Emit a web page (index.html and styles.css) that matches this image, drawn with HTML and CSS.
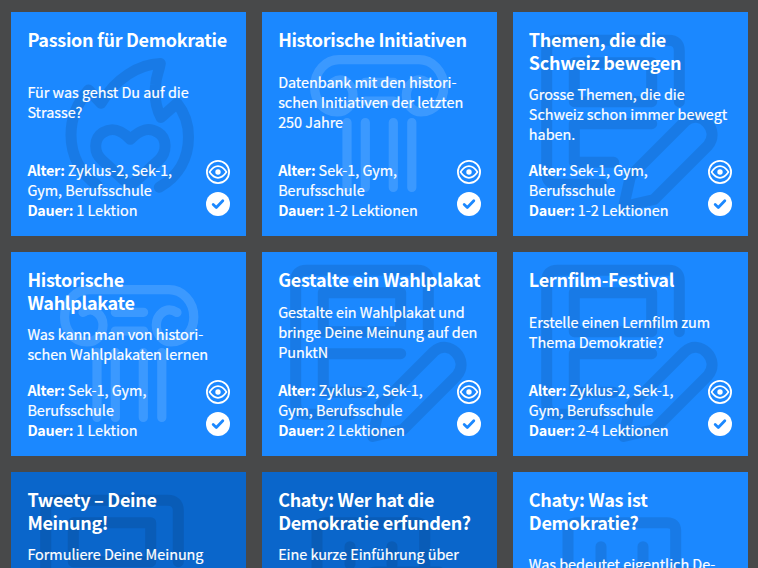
FILE: index.html
```
<!DOCTYPE html>
<html lang="de">
<head>
<meta charset="utf-8">
<title>Lerneinheiten</title>
<link rel="stylesheet" href="styles.css">
</head>
<body>
<svg class="defs" width="0" height="0" aria-hidden="true">
  <symbol id="flame" viewBox="-100 -100 200 200">
    <path d="M30.300 63.300C50 52 59.500 34 59.500 13C59.500 0 55 -12 48 -20.700L32 -6.500C27 -16 25 -25 26.600 -39C27 -48 30 -52 31.300 -60.500C10 -60 -14 -45 -28 -20.700L-40.400 -34C-51 -22 -58 -7 -58 11C-58 32 -48 50 -32 61"/>
    <path d="M1.300 62L-27 36C-36 28 -35 14 -26 8.500C-17 3 -9 5 1.300 15.300C12 5 20 3 29 8.500C38 14 38.500 28 30 36Z"/>
  </symbol>
  <symbol id="column" viewBox="-100 -100 200 200">
    <path d="M-46 -41.500C-35 -49 -26 -38 -26 -29C-26 -19 -33 -12 -42 -12C-56 -12 -64.400 -24 -64.400 -37C-64.400 -53 -53 -64.400 -40 -64.400H40C53 -64.400 64.800 -53 64.800 -37C64.800 -24 56 -12 42 -12C34 -12 27.300 -19 27.300 -29C27.300 -38 36 -49 48 -41.500"/>
    <path d="M-13.700 -41.700H14.600M-13.700 -23H14.600M-32 -1.500V63.500M-13.700 -1.500V63.500M14.300 -1.500V63.500M32.800 -1.500V63.500"/>
  </symbol>
  <symbol id="paper" viewBox="-100 -100 200 200">
    <path d="M49.300 -22.300V-73Q49.300 -83.700 38.500 -83.700H-72.500Q-83.300 -83.700 -83.300 -73V49.500Q-83.300 60.300 -72.500 60.300H-28M-55.700 -61.300H21.700V-22.300H-55.700ZM21.700 -.3H-55.700V38.300H-16.300"/>
    <path d="M-6.300 82.500L.5 52L55 -2.500C70 -16 91 6 78 21.500L24 75.500Z"/>
  </symbol>
  <symbol id="chat" viewBox="-100 -100 200 200">
    <path d="M-62 10V-53Q-62 -61.300 -53 -61.300H37Q45.700 -61.300 45.700 -53V-12M-29 -37.300V-20M13 -37.300V-20M-12 2V-4Q-12 -12 -3 -12H60"/>
  </symbol>
  <symbol id="eye" viewBox="0 0 24 24">
    <circle cx="12" cy="12" r="11.100" fill="none" stroke="#fff" stroke-width="1.800"/>
    <path d="M3.500 12Q7.500 6.200 12 6.200T20.500 12Q16.500 17.800 12 17.800T3.500 12Z" fill="none" stroke="#fff" stroke-width="1.700" stroke-linejoin="round"/>
    <circle cx="12" cy="12" r="2.700" fill="#fff"/>
  </symbol>
  <symbol id="check" viewBox="0 0 24 24">
    <circle cx="12" cy="12" r="12" fill="#fff"/>
    <path d="M7.200 12.500L10.300 15.400L16.800 8.800" fill="none" stroke="#1b88ff" stroke-width="2.800" stroke-linecap="round" stroke-linejoin="round"/>
  </symbol>
</svg>
<main class="grid">
  <article class="card">
    <svg class="mark"><use href="#flame"/></svg>
    <h2>Passion für Demokratie</h2>
    <p class="text">Für was gehst Du auf die<br>Strasse?</p>
    <footer><p><b>Alter:</b> Zyklus-2, Sek-1,<br>Gym, Berufsschule<br><b>Dauer:</b> 1 Lektion</p><div class="icons"><svg><use href="#eye"/></svg><svg><use href="#check"/></svg></div></footer>
  </article>
  <article class="card">
    <svg class="mark light"><use href="#column"/></svg>
    <h2>Historische Initiativen</h2>
    <p class="text">Datenbank mit den histori-<br>schen Initiativen der letzten<br>250 Jahre</p>
    <footer><p><b>Alter:</b> Sek-1, Gym,<br>Berufsschule<br><b>Dauer:</b> 1-2 Lektionen</p><div class="icons"><svg><use href="#eye"/></svg><svg><use href="#check"/></svg></div></footer>
  </article>
  <article class="card">
    <svg class="mark"><use href="#paper"/></svg>
    <h2>Themen, die die<br>Schweiz bewegen</h2>
    <p class="text">Grosse Themen, die die<br>Schweiz schon immer bewegt<br>haben.</p>
    <footer><p><b>Alter:</b> Sek-1, Gym,<br>Berufsschule<br><b>Dauer:</b> 1-2 Lektionen</p><div class="icons"><svg><use href="#eye"/></svg><svg><use href="#check"/></svg></div></footer>
  </article>
  <article class="card">
    <svg class="mark light"><use href="#column"/></svg>
    <h2>Historische<br>Wahlplakate</h2>
    <p class="text">Was kann man von histori-<br>schen Wahlplakaten lernen</p>
    <footer><p><b>Alter:</b> Sek-1, Gym,<br>Berufsschule<br><b>Dauer:</b> 1 Lektion</p><div class="icons"><svg><use href="#eye"/></svg><svg><use href="#check"/></svg></div></footer>
  </article>
  <article class="card">
    <svg class="mark"><use href="#paper"/></svg>
    <h2>Gestalte ein Wahlplakat</h2>
    <p class="text">Gestalte ein Wahlplakat und<br>bringe Deine Meinung auf den<br>PunktN</p>
    <footer><p><b>Alter:</b> Zyklus-2, Sek-1,<br>Gym, Berufsschule<br><b>Dauer:</b> 2 Lektionen</p><div class="icons"><svg><use href="#eye"/></svg><svg><use href="#check"/></svg></div></footer>
  </article>
  <article class="card">
    <svg class="mark"><use href="#paper"/></svg>
    <h2>Lernfilm-Festival</h2>
    <p class="text">Erstelle einen Lernfilm zum<br>Thema Demokratie?</p>
    <footer><p><b>Alter:</b> Zyklus-2, Sek-1,<br>Gym, Berufsschule<br><b>Dauer:</b> 2-4 Lektionen</p><div class="icons"><svg><use href="#eye"/></svg><svg><use href="#check"/></svg></div></footer>
  </article>
  <article class="card deep">
    <svg class="mark"><use href="#paper"/></svg>
    <h2>Tweety – Deine<br>Meinung!</h2>
    <p class="text top">Formuliere Deine Meinung</p>
  </article>
  <article class="card deep">
    <svg class="mark"><use href="#chat"/></svg>
    <h2>Chaty: Wer hat die<br>Demokratie erfunden?</h2>
    <p class="text top">Eine kurze Einführung über</p>
  </article>
  <article class="card">
    <svg class="mark"><use href="#chat"/></svg>
    <h2>Chaty: Was ist<br>Demokratie?</h2>
    <p class="text top late">Was bedeutet eigentlich De-</p>
  </article>
</main>
</body>
</html>
```
FILE: styles.css
```
* { box-sizing: border-box; }
html { overflow: hidden; background: #48494a; }
body {
  margin: 0;
  height: 568px;
  overflow: hidden;
  color: #fff;
  font-family: "Noto Sans CJK JP", "Noto Sans", sans-serif;
  font-size: 14.400px;
  line-height: 20px;
  letter-spacing: -.02px;
  -webkit-text-stroke: .2px #fff;
}
.defs { position: absolute; }
h2, p { margin: 0; white-space: nowrap; }
.grid {
  display: grid;
  grid-template-columns: repeat(3, minmax(0, 1fr));
  grid-template-rows: 224px 204px 224px;
  gap: 16px;
  padding: 12px 10.400px 0 11.400px;
}
.card {
  position: relative;
  display: flex;
  flex-direction: column;
  padding: 16px;
  background: #1b88ff;
}
.deep { background: #0a66cb; }
.mark {
  position: absolute;
  left: calc(50% - 100px);
  top: calc(50% - 100px);
  width: 200px;
  height: 200px;
  fill: none;
  stroke: #000;
  stroke-width: 11;
  stroke-linecap: round;
  stroke-linejoin: round;
  opacity: .095;
}
.light { stroke: #fff; stroke-width: 9.200; opacity: .14; }
.card > :not(.mark) { position: relative; }
h2 {
  margin-bottom: 9.800px;
  font-size: 18px;
  font-weight: 700;
  line-height: 23px;
  letter-spacing: -.3px;
  -webkit-text-stroke: 0;
}
b { letter-spacing: -.3px; -webkit-text-stroke: 0; }
.text { margin-block: auto; }
.text.top { margin-top: 0; }
.text.late { margin-top: 10px; }
footer {
  display: flex;
  justify-content: space-between;
  align-items: flex-start;
  margin-top: 16px;
  height: 60px;
}
.icons { display: flex; flex-direction: column; gap: 8px; }
.icons svg { display: block; width: 24px; height: 24px; }
```
